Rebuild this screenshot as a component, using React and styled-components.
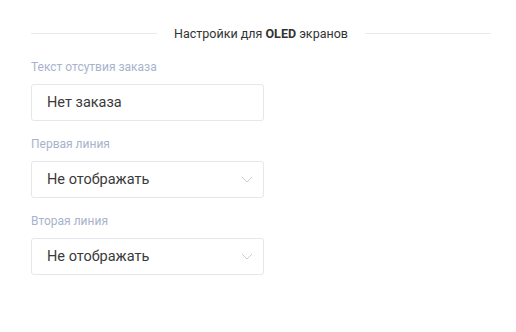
import React from 'react';
import styled, { createGlobalStyle } from 'styled-components';

const Global = createGlobalStyle`
	body {
		margin: 0;
		background: #fff;
		font-family: Roboto, 'Liberation Sans', sans-serif;
	}
`;

const Panel = styled.div`
	width: 460px;
	padding: 24px 0 0 31px;
`;

const Heading = styled.div`
	display: flex;
	align-items: center;
	gap: 17px;
	font-size: 12.5px;
	color: #333;
	height: 18px;

	&::before,
	&::after {
		content: '';
		flex: 1;
		height: 1px;
		background: #e8e9ee;
	}

	b {
		font-weight: 700;
	}
`;

const Field = styled.div`
	display: flex;
	flex-direction: column;
	width: 233px;
	margin-top: ${({ first }) => (first ? '18px' : '16px')};
`;

const Label = styled.div`
	font-size: 12px;
	line-height: 14px;
	color: #a7b3cc;
	margin-bottom: 10px;
`;

const Box = styled.div`
	display: flex;
	align-items: center;
	justify-content: space-between;
	box-sizing: border-box;
	height: 37px;
	padding: 0 10px 0 15px;
	border: 1px solid #e6e7eb;
	border-radius: 3px;
	font-size: 14.5px;
	color: #3a3a3a;
`;

const Chevron = () => (
	<svg width='12' height='7' viewBox='0 0 12 7' fill='none'>
		<path d='M1 1l5 5 5-5' stroke='#c9ccd3' strokeWidth='1' />
	</svg>
);

const fields = [
	{ label: 'Текст отсутвия заказа', value: 'Нет заказа' },
	{ label: 'Первая линия', value: 'Не отображать', select: true },
	{ label: 'Вторая линия', value: 'Не отображать', select: true },
];

const App = () => (
	<>
		<Global />
		<Panel>
			<Heading>
				<span>
					Настройки для <b>OLED</b> экранов
				</span>
			</Heading>
			{fields.map((f, i) => (
				<Field key={f.label} first={i === 0}>
					<Label>{f.label}</Label>
					<Box>
						{f.value}
						{f.select && <Chevron />}
					</Box>
				</Field>
			))}
		</Panel>
	</>
);

export default App;
